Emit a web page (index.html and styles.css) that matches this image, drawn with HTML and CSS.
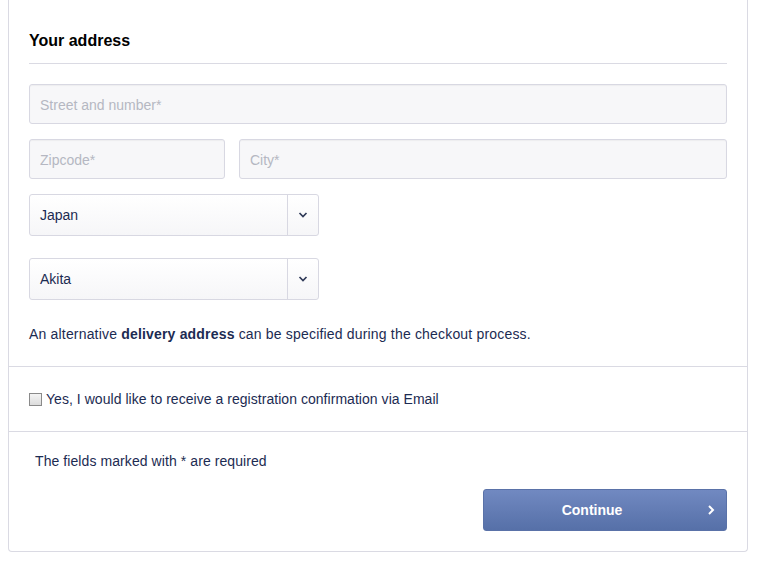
FILE: index.html
```html
<!DOCTYPE html>
<html>
<head>
<meta charset="utf-8">
<link rel="stylesheet" href="styles.css">
</head>
<body>
<div class="panel">
  <div class="section address">
    <h2 class="heading">Your address</h2>
    <div class="fields">
      <input class="input" type="text" placeholder="Street and number*">
      <div class="row">
        <input class="input zip" type="text" placeholder="Zipcode*">
        <input class="input city" type="text" placeholder="City*">
      </div>
      <div class="select">
        <span class="select-value">Japan</span>
        <span class="select-arrow"><svg width="10" height="6" viewBox="0 0 10 6"><path d="M1.5 1 L5 4.5 L8.5 1" fill="none" stroke="#2f3a58" stroke-width="1.7"/></svg></span>
      </div>
      <div class="select second">
        <span class="select-value">Akita</span>
        <span class="select-arrow"><svg width="10" height="6" viewBox="0 0 10 6"><path d="M1.5 1 L5 4.5 L8.5 1" fill="none" stroke="#2f3a58" stroke-width="1.7"/></svg></span>
      </div>
    </div>
    <p class="note">An alternative <strong>delivery address</strong> can be specified during the checkout process.</p>
  </div>
  <div class="section confirm">
    <label class="check"><span class="box"></span>Yes, I would like to receive a registration confirmation via Email</label>
  </div>
  <div class="section actions">
    <p class="required">The fields marked with * are required</p>
    <div class="btn-row">
      <button class="btn">Continue<span class="btn-arrow"><svg width="8" height="12" viewBox="0 0 8 12"><path d="M2 2 L6 6 L2 10" fill="none" stroke="#fff" stroke-width="2"/></svg></span></button>
    </div>
  </div>
</div>
</body>
</html>
```
FILE: styles.css
```css
* { box-sizing: border-box; }
body {
  margin: 0 15px 0 8px;
  font-family: "Liberation Sans", Arial, sans-serif;
  font-size: 14px;
  color: #1c2b52;
  background: #fff;
}
.panel {
  width: 740px;
  border: 1px solid #dadae3;
  border-top: 0;
  border-radius: 0 0 4px 4px;
}
.section { padding: 0 20px; }
.address { padding-top: 31px; padding-bottom: 22px; border-bottom: 1px solid #dadae3; }
.heading {
  margin: 0;
  font-size: 16px;
  line-height: 20px;
  font-weight: bold;
  color: #000;
  padding-bottom: 12px;
  border-bottom: 1px solid #dadae3;
}
.fields {
  margin-top: 20px;
  display: flex;
  flex-direction: column;
  gap: 15px;
}
.input {
  display: block;
  width: 100%;
  height: 40px;
  border: 1px solid #d8d8e2;
  border-radius: 3px;
  background: #f7f7f9;
  padding: 1px 10px 0;
  font-family: inherit;
  font-size: 14px;
  color: #1c2b52;
  box-shadow: inset 0 1px 1px rgba(0,0,0,0.04);
}
.input::placeholder { color: #b5b7c2; }
.row { display: flex; gap: 14px; }
.zip { width: 196px; flex: none; }
.city { flex: 1; }
.select {
  width: 290px;
  height: 42px;
  display: flex;
  border: 1px solid #d8d8e2;
  border-radius: 3px;
  background: linear-gradient(#ffffff, #f6f6f8);
}
.select.second { margin-top: 7px; }
.select-value { flex: 1; padding-left: 10px; line-height: 40px; color: #1c2b52; }
.select-arrow {
  width: 31px;
  border-left: 1px solid #d8d8e2;
  display: flex;
  align-items: center;
  justify-content: center;
}
.note { margin: 24px 0 0; line-height: 20px; letter-spacing: 0.18px; }
.note strong { color: #1c2b52; }
.confirm { padding-top: 22px; padding-bottom: 22px; border-bottom: 1px solid #dadae3; }
.check { display: flex; align-items: center; line-height: 20px; letter-spacing: 0.04px; }
.box {
  width: 13px;
  height: 13px;
  border: 1px solid #8a8a8a;
  background: linear-gradient(#f4f4f4, #dcdcdc);
  margin-right: 4px;
  flex: none;
}
.actions { padding-top: 19px; padding-bottom: 20px; }
.required { margin: 0 0 0 6px; line-height: 20px; letter-spacing: 0.08px; }
.btn-row { display: flex; justify-content: flex-end; margin-top: 18px; }
.btn {
  width: 244px;
  height: 42px;
  border: 1px solid #5a72a8;
  border-radius: 3px;
  background: linear-gradient(#7189c1, #5670a8);
  color: #fff;
  font-family: inherit;
  font-size: 14px;
  font-weight: bold;
  display: flex;
  align-items: center;
  justify-content: center;
  position: relative;
  padding: 0 26px 0 0;
}
.btn-arrow { position: absolute; right: 11px; top: 14px; display: flex; }
```
